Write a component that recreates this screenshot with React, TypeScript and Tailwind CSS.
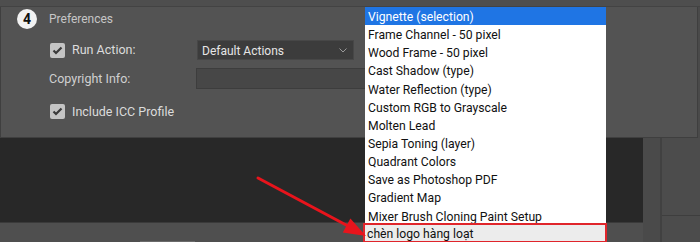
import React from "react";

const items = [
  "Vignette (selection)",
  "Frame Channel - 50 pixel",
  "Wood Frame - 50 pixel",
  "Cast Shadow (type)",
  "Water Reflection (type)",
  "Custom RGB to Grayscale",
  "Molten Lead",
  "Sepia Toning (layer)",
  "Quadrant Colors",
  "Save as Photoshop PDF",
  "Gradient Map",
  "Mixer Brush Cloning Paint Setup",
];

function Check() {
  return (
    <div className="w-[15px] h-[15px] rounded-[2px] bg-[#c4c4c4] flex items-center justify-center">
      <svg width="11" height="9" viewBox="0 0 11 9">
        <polyline points="1.5,4.5 4,7 9.5,1.5" fill="none" stroke="#3a3a3a" strokeWidth="2.2" />
      </svg>
    </div>
  );
}

export default function App() {
  return (
    <div
      className="relative w-[700px] h-[242px] overflow-hidden bg-[#4d4d4d] flex flex-col"
      style={{ fontFamily: "Roboto, 'Liberation Sans', sans-serif" }}
    >
      {/* top strip */}
      <div className="h-[7px] bg-[#4e4e4e] border-b border-[#434343] shrink-0" />

      {/* panel */}
      <div className="h-[131px] shrink-0 flex">
        <div className="w-[698px] h-full bg-[#535353] border-l border-r border-b border-[#3f3f3f] flex flex-col">
          <div className="flex items-center h-[22px] mt-[1px] pl-[16px]">
            <div className="w-[20px] h-[20px] rounded-full bg-[#f2f2f2] flex items-center justify-center text-[14px] font-bold text-[#111] leading-none">
              4
            </div>
            <span className="ml-[12px] text-[12px] text-[#c6c6c6]">Preferences</span>
          </div>
          <div className="flex items-center h-[20px] mt-[10px]">
            <div className="w-[196px] flex items-center pl-[49px]">
              <Check />
              <span className="ml-[7px] text-[12.5px] text-[#dcdcdc] pt-[1px]">Run Action:</span>
            </div>
            <div className="w-[157px] h-[20px] bg-[#3c3c3c] border border-[#474747] flex items-center justify-between pl-[4px] pr-[6px]">
              <span className="text-[12px] text-[#e6e6e6] pt-[1px]">Default Actions</span>
              <svg width="8" height="5" viewBox="0 0 8 5">
                <polyline points="0.5,0.5 4,4 7.5,0.5" fill="none" stroke="#9a9a9a" strokeWidth="1" />
              </svg>
            </div>
          </div>
          <div className="flex items-center h-[21px] mt-[8px]">
            <div className="w-[195px] pl-[48px] text-[12.5px] text-[#d0d0d0] pt-[1px]">Copyright Info:</div>
            <div className="w-[200px] h-[21px] bg-[#474747] border border-[#3d3d3d]" />
          </div>
          <div className="flex items-center h-[15px] mt-[15px] pl-[49px]">
            <Check />
            <span className="ml-[7px] text-[12.5px] text-[#dcdcdc] pt-[1px]">Include ICC Profile</span>
          </div>
        </div>
        <div className="flex-1 bg-[#4a4a4a]" />
      </div>

      {/* lower area */}
      <div className="flex-1 flex">
        <div className="w-[643px] flex flex-col">
          <div className="h-[85px] bg-[#282828] border-b border-[#3a3a3a]" />
          <div className="flex-1 bg-[#4f4f4f] flex items-end">
            <div className="ml-[140px] w-[55px] h-[1px] bg-[#6a6a6a]" />
          </div>
        </div>
        <div className="w-[19px] bg-[#4a4a4a] border-r-2 border-[#414141]" />
        <div className="flex-1 flex flex-col">
          <div className="h-[78px] bg-[#4c4c4c] border-b border-[#3e3e3e]" />
          <div className="flex-1 bg-[#4c4c4c]" />
        </div>
      </div>

      {/* dropdown list */}
      <div className="absolute left-[365px] top-[7px] w-[241px] bg-white">
        {items.map((t, i) => (
          <div
            key={t}
            className={
              i === 0
                ? "h-[18.15px] leading-[18px] pt-[1px] pl-[3px] text-[12.2px] bg-[#1f75e4] text-white"
                : "h-[18.15px] leading-[18px] pt-[1px] pl-[3px] text-[12.2px] text-[#111]"
            }
          >
            {t}
          </div>
        ))}
      </div>
      <div className="absolute left-[363px] top-[223px] w-[244px] h-[20px] border-2 border-[#e0252b] bg-[#ececec] pl-[2px] pt-[1px] text-[12.2px] leading-[16px] text-[#111]">
        chèn logo hàng loạt
      </div>

      {/* red arrow */}
      <svg className="absolute left-0 top-0" width="700" height="242" viewBox="0 0 700 242">
        <line x1="258" y1="178" x2="348" y2="226" stroke="#e8141c" strokeWidth="3" strokeLinecap="round" />
        <polygon points="366,236 342.8,232.6 350.4,218.6" fill="#e8141c" />
      </svg>
    </div>
  );
}
